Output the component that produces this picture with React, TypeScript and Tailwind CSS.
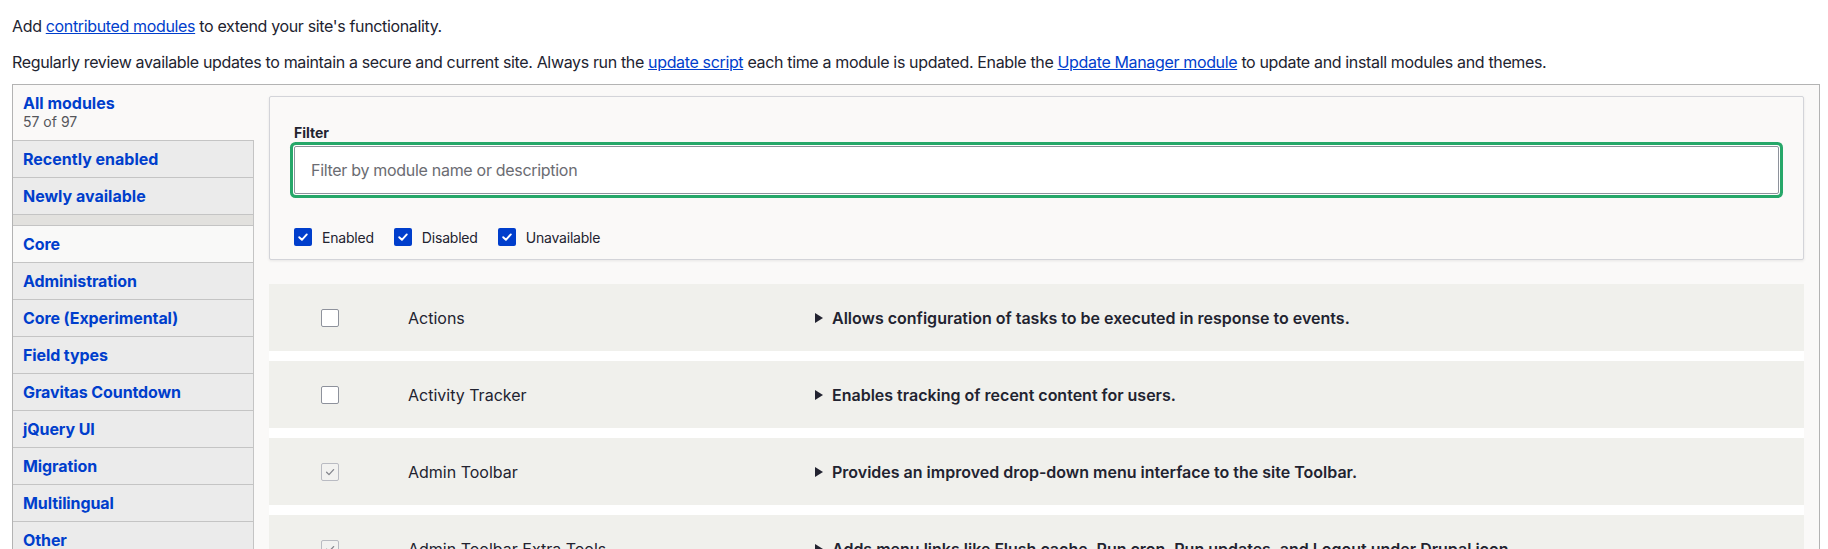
import React from "react";

const BLUE = "text-[#003ecc]";

function BlueCheck() {
  return (
    <span className="flex h-[18px] w-[18px] shrink-0 items-center justify-center rounded-[2px] bg-[#003ecc]">
      <svg width="12" height="12" viewBox="0 0 12 12" fill="none">
        <path d="M2.2 6.2 L4.9 8.8 L9.8 3.4" stroke="#fff" strokeWidth="1.9" strokeLinecap="round" strokeLinejoin="round" />
      </svg>
    </span>
  );
}

function RowCheck({ checked }: { checked: boolean }) {
  if (checked) {
    return (
      <span className="flex h-[18px] w-[18px] shrink-0 items-center justify-center rounded-[2px] border border-[#b9bbc2] bg-[#f2f2f0]">
        <svg width="12" height="12" viewBox="0 0 12 12" fill="none">
          <path d="M2.6 6.3 L5 8.6 L9.6 3.6" stroke="#84868d" strokeWidth="1.3" strokeLinecap="round" strokeLinejoin="round" />
        </svg>
      </span>
    );
  }
  return <span className="block h-[18px] w-[18px] shrink-0 rounded-[2px] border border-[#8e929c] bg-white" />;
}

const tabs = [
  "Core",
  "Administration",
  "Core (Experimental)",
  "Field types",
  "Gravitas Countdown",
  "jQuery UI",
  "Migration",
  "Multilingual",
  "Other",
];

const rows = [
  { name: "Actions", desc: "Allows configuration of tasks to be executed in response to events.", checked: false },
  { name: "Activity Tracker", desc: "Enables tracking of recent content for users.", checked: false },
  { name: "Admin Toolbar", desc: "Provides an improved drop-down menu interface to the site Toolbar.", checked: true },
  {
    name: "Admin Toolbar Extra Tools",
    desc: "Adds menu links like Flush cache, Run cron, Run updates, and Logout under Drupal icon.",
    checked: true,
  },
];

export default function App() {
  return (
    <div className="h-[549px] overflow-hidden bg-white font-['Inter','Noto_Sans',sans-serif] text-[#222330]">
      <div className="pl-3 pr-2 pt-[14px]">
        <p className="text-[16px] leading-6 tracking-[-0.35px]">
          Add{" "}
          <a href="#" className={`${BLUE} underline`}>
            contributed modules
          </a>{" "}
          to extend your site's functionality.
        </p>
        <p className="mt-3 text-[16px] leading-6 tracking-[-0.35px]">
          Regularly review available updates to maintain a secure and current site. Always run the{" "}
          <a href="#" className={`${BLUE} underline`}>
            update script
          </a>{" "}
          each time a module is updated. Enable the{" "}
          <a href="#" className={`${BLUE} underline`}>
            Update Manager module
          </a>{" "}
          to update and install modules and themes.
        </p>

        <div className="mt-[10px] flex border border-[#b3b3b3]">
          <nav className="w-[241px] shrink-0 bg-[#ebebeb]">
            <div className="h-[56px] border-b border-[#c4c4c4] bg-[#faf9f8] pl-[10px] pt-2">
              <div className={`text-[16px] font-bold leading-5 ${BLUE}`}>All modules</div>
              <div className="text-[14px] leading-[18px] text-[#55565b]">57 of 97</div>
            </div>
            {["Recently enabled", "Newly available"].map((t) => (
              <div
                key={t}
                className={`flex h-[37px] items-center border-b border-r border-[#c4c4c4] bg-[#ebebeb] pl-[10px] text-[16px] font-bold ${BLUE}`}
              >
                {t}
              </div>
            ))}
            <div className="h-[11px] border-b border-r border-[#c4c4c4] bg-[#e2e1de]" />
            {tabs.map((t, i) => (
              <div
                key={t}
                className={`flex h-[37px] items-center border-b border-r border-[#c4c4c4] pl-[10px] text-[16px] font-bold tracking-[-0.1px] ${BLUE} ${
                  i === 0 ? "bg-[#f9f9f8]" : "bg-[#ebebeb]"
                }`}
              >
                {t}
              </div>
            ))}
          </nav>

          <div className="min-w-0 flex-1 bg-[#faf9f8] pl-[15px] pr-[15px] pt-[11px]">
            <div className="rounded-[2px] border border-[#d3d4d9] bg-[#faf9f8] px-6 pb-[10px] pt-[27px] shadow-[0_1px_3px_rgba(0,0,0,0.08)]">
              <div className="text-[14px] font-bold leading-[18px]">Filter</div>
              <div className="mt-1 flex h-12 items-center rounded-[2px] border border-[#8e929c] bg-white px-4 text-[16px] tracking-[-0.3px] text-[#6b6c72] shadow-[0_0_0_1px_#fff,0_0_0_4px_#26a769]">
                Filter by module name or description
              </div>
              <div className="mt-[31px] flex h-6 items-center text-[14px] tracking-[-0.2px]">
                {["Enabled", "Disabled", "Unavailable"].map((l) => (
                  <label key={l} className="mr-5 flex items-center gap-[10px]">
                    <BlueCheck />
                    <span>{l}</span>
                  </label>
                ))}
              </div>
            </div>

            <div className="mt-6 flex flex-col gap-[10px] bg-white">
              {rows.map((r) => (
                <div key={r.name} className="flex h-[67px] items-center bg-[#f0f0ec]">
                  <div className="w-[139px] shrink-0 pl-[52px]">
                    <RowCheck checked={r.checked} />
                  </div>
                  <div className="w-[407px] shrink-0 text-[16px]">{r.name}</div>
                  <div className="flex items-center gap-[9px] text-[16px] font-semibold">
                    <svg width="8" height="10" viewBox="0 0 8 10">
                      <polygon points="0,0 8,5 0,10" fill="#222330" />
                    </svg>
                    <span>{r.desc}</span>
                  </div>
                </div>
              ))}
            </div>
          </div>
        </div>
      </div>
    </div>
  );
}
